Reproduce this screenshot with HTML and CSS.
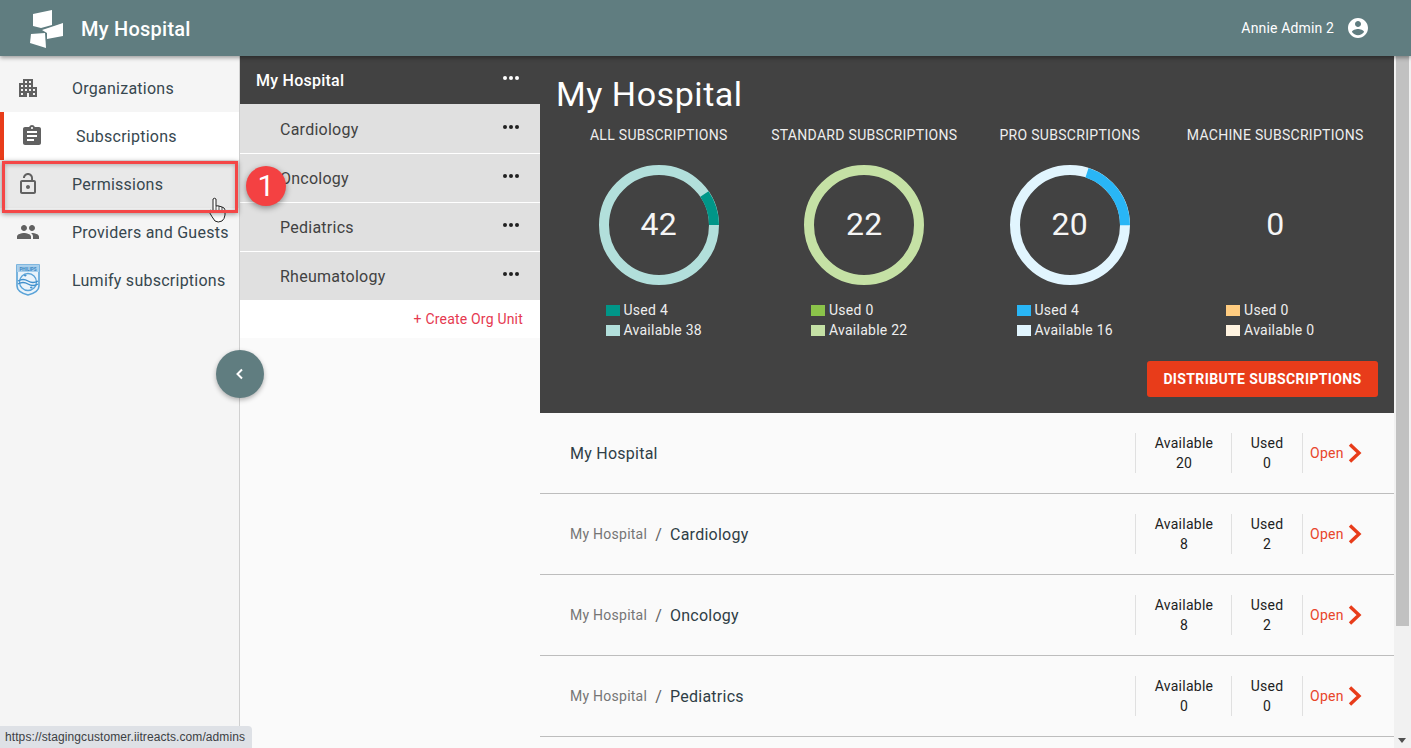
FILE: index.html
```html
<!DOCTYPE html>
<html lang="en">
<head>
  <meta charset="UTF-8" />
  <title>My Hospital</title>
  <link rel="stylesheet" href="styles.css">
</head>
<body>

  <header class="topbar">
    <div class="brand">
      <svg class="brand-logo" width="34" height="38" viewBox="30 9 34 38">
        <path d="M33 13 L52 9 L52 24 L41 27 L33 25 Z" fill="#fff"/>
        <path d="M42 29 L63 22 L63 35 L47 38 L47 32 Z" fill="#fff"/>
        <path d="M31 33 L45 32 L46 47 L30 42 Z" fill="#fff"/>
      </svg>
      <span class="brand-name">My Hospital</span>
    </div>
    <div class="user">
      <span>Annie Admin 2</span>
      <svg width="24" height="24" viewBox="0 0 24 24"><path fill="#fff" d="M12 2C6.48 2 2 6.48 2 12s4.48 10 10 10 10-4.48 10-10S17.52 2 12 2zm0 3c1.66 0 3 1.34 3 3s-1.34 3-3 3-3-1.34-3-3 1.34-3 3-3zm0 14.2c-2.5 0-4.71-1.28-6-3.22.03-1.99 4-3.08 6-3.08 1.99 0 5.97 1.09 6 3.08-1.29 1.94-3.5 3.22-6 3.22z"/></svg>
    </div>
  </header>

  <div class="content">
    <nav class="sidebar">
      <a class="nav-item">
        <svg width="24" height="24" viewBox="0 0 24 24"><path fill="#616161" d="M17 11V3H7v4H3v14h8v-4h2v4h8V11h-4zM7 19H5v-2h2v2zm0-4H5v-2h2v2zm0-4H5V9h2v2zm4 4H9v-2h2v2zm0-4H9V9h2v2zm0-4H9V5h2v2zm4 8h-2v-2h2v2zm0-4h-2V9h2v2zm0-4h-2V5h2v2zm4 12h-2v-2h2v2zm0-4h-2v-2h2v2z"/></svg>
        <span>Organizations</span>
      </a>
      <a class="nav-item active">
        <svg width="24" height="24" viewBox="0 0 24 24"><path fill="#616161" d="M19 3h-4.18C14.4 1.84 13.3 1 12 1s-2.4.84-2.82 2H5c-1.1 0-2 .9-2 2v14c0 1.1.9 2 2 2h14c1.1 0 2-.9 2-2V5c0-1.1-.9-2-2-2zm-7 0c.55 0 1 .45 1 1s-.45 1-1 1-1-.45-1-1 .45-1 1-1zm2 14H7v-2h7v2zm3-4H7v-2h10v2zm0-4H7V7h10v2z"/></svg>
        <span>Subscriptions</span>
      </a>
      <a class="nav-item hover">
        <svg width="24" height="24" viewBox="0 0 24 24"><path fill="#616161" d="M12 17c1.1 0 2-.9 2-2s-.9-2-2-2-2 .9-2 2 .9 2 2 2zm6-9h-1V6c0-2.76-2.24-5-5-5S7 3.24 7 6h1.9c0-1.71 1.39-3.1 3.1-3.1 1.71 0 3.1 1.39 3.1 3.1v2H6c-1.1 0-2 .9-2 2v10c0 1.1.9 2 2 2h12c1.1 0 2-.9 2-2V10c0-1.1-.9-2-2-2zm0 12H6V10h12v10z"/></svg>
        <span>Permissions</span>
      </a>
      <a class="nav-item">
        <svg width="24" height="24" viewBox="0 0 24 24"><path fill="#616161" d="M16 11c1.66 0 2.99-1.34 2.99-3S17.66 5 16 5c-1.66 0-3 1.34-3 3s1.34 3 3 3zm-8 0c1.66 0 2.99-1.34 2.99-3S9.66 5 8 5C6.34 5 5 6.34 5 8s1.34 3 3 3zm0 2c-2.33 0-7 1.17-7 3.5V19h14v-2.5c0-2.33-4.67-3.5-7-3.5zm8 0c-.29 0-.62.02-.97.05 1.16.84 1.97 1.97 1.97 3.45V19h6v-2.5c0-2.33-4.67-3.5-7-3.5z"/></svg>
        <span>Providers and Guests</span>
      </a>
      <a class="nav-item">
        <svg class="shield" width="24" height="32" viewBox="0 0 24 32">
          <path d="M1 1 H23 V22 Q23 28 12 31 Q1 28 1 22 Z" fill="#eaf3fa" stroke="#5aa3d8" stroke-width="1.6"/>
          <rect x="1" y="1" width="22" height="7" fill="#a9cfeb"/>
          <text x="12" y="6.5" class="shield-text">PHILIPS</text>
          <circle cx="12" cy="18" r="8.5" fill="none" stroke="#5aa3d8" stroke-width="1.3"/>
          <path d="M2 17 Q7 14 12 17 T22 17" fill="none" stroke="#3f8fcc" stroke-width="1.4"/>
          <path d="M2 20 Q7 17 12 20 T22 20" fill="none" stroke="#3f8fcc" stroke-width="1.4"/>
          <path d="M8 11.5 h2.5 M9.2 10.3 v2.4 M14 23.5 h2.5 M15.2 22.3 v2.4" stroke="#3f8fcc" stroke-width=".9"/>
        </svg>
        <span>Lumify subscriptions</span>
      </a>
    </nav>

    <section class="orgs">
      <div class="org-head">
        <span>My Hospital</span>
        <span class="dots"><i></i><i></i><i></i></span>
      </div>
      <div class="org-item"><span>Cardiology</span><span class="dots"><i></i><i></i><i></i></span></div>
      <div class="org-item"><span>Oncology</span><span class="dots"><i></i><i></i><i></i></span></div>
      <div class="org-item"><span>Pediatrics</span><span class="dots"><i></i><i></i><i></i></span></div>
      <div class="org-item"><span>Rheumatology</span><span class="dots"><i></i><i></i><i></i></span></div>
      <div class="org-create">+ Create Org Unit</div>
    </section>

    <main class="main">
      <section class="summary">
        <h1>My Hospital</h1>
        <div class="charts">
          <div class="chart">
            <h2>ALL SUBSCRIPTIONS</h2>
            <div class="donut">
              <svg width="120" height="120" viewBox="0 0 120 120">
                <circle cx="60" cy="60" r="55" fill="none" stroke="#b2dfdb" stroke-width="10"/>
                <circle cx="60" cy="60" r="55" fill="none" stroke="#009688" stroke-width="10" stroke-dasharray="32.9 400" transform="rotate(-34.3 60 60)"/>
              </svg>
              <b>42</b>
            </div>
            <ul class="legend">
              <li><i class="sw sw-teal"></i>Used 4</li>
              <li><i class="sw sw-teal-l"></i>Available 38</li>
            </ul>
          </div>
          <div class="chart">
            <h2>STANDARD SUBSCRIPTIONS</h2>
            <div class="donut">
              <svg width="120" height="120" viewBox="0 0 120 120">
                <circle cx="60" cy="60" r="55" fill="none" stroke="#c5e1a5" stroke-width="10"/>
              </svg>
              <b>22</b>
            </div>
            <ul class="legend">
              <li><i class="sw sw-green"></i>Used 0</li>
              <li><i class="sw sw-green-l"></i>Available 22</li>
            </ul>
          </div>
          <div class="chart">
            <h2>PRO SUBSCRIPTIONS</h2>
            <div class="donut">
              <svg width="120" height="120" viewBox="0 0 120 120">
                <circle cx="60" cy="60" r="55" fill="none" stroke="#e1f5fe" stroke-width="10"/>
                <circle cx="60" cy="60" r="55" fill="none" stroke="#29b6f6" stroke-width="10" stroke-dasharray="69.1 400" transform="rotate(-72 60 60)"/>
              </svg>
              <b>20</b>
            </div>
            <ul class="legend">
              <li><i class="sw sw-blue"></i>Used 4</li>
              <li><i class="sw sw-blue-l"></i>Available 16</li>
            </ul>
          </div>
          <div class="chart">
            <h2>MACHINE SUBSCRIPTIONS</h2>
            <div class="donut"><b>0</b></div>
            <ul class="legend">
              <li><i class="sw sw-orange"></i>Used 0</li>
              <li><i class="sw sw-orange-l"></i>Available 0</li>
            </ul>
          </div>
        </div>
        <div class="actions">
          <button class="btn">DISTRIBUTE SUBSCRIPTIONS</button>
        </div>
      </section>

      <div class="row">
        <div class="row-name"><span class="unit">My Hospital</span></div>
        <div class="stat stat-a">Available<br>20</div>
        <div class="stat stat-u">Used<br>0</div>
        <a class="open">Open <svg width="14" height="20" viewBox="0 0 14 20"><path d="M2 1.5 L11 10 L2 18.5" fill="none" stroke="#e83c1a" stroke-width="3.4"/></svg></a>
      </div>
      <div class="row">
        <div class="row-name"><span class="crumb">My Hospital</span><span class="sep">/</span><span class="unit">Cardiology</span></div>
        <div class="stat stat-a">Available<br>8</div>
        <div class="stat stat-u">Used<br>2</div>
        <a class="open">Open <svg width="14" height="20" viewBox="0 0 14 20"><path d="M2 1.5 L11 10 L2 18.5" fill="none" stroke="#e83c1a" stroke-width="3.4"/></svg></a>
      </div>
      <div class="row">
        <div class="row-name"><span class="crumb">My Hospital</span><span class="sep">/</span><span class="unit">Oncology</span></div>
        <div class="stat stat-a">Available<br>8</div>
        <div class="stat stat-u">Used<br>2</div>
        <a class="open">Open <svg width="14" height="20" viewBox="0 0 14 20"><path d="M2 1.5 L11 10 L2 18.5" fill="none" stroke="#e83c1a" stroke-width="3.4"/></svg></a>
      </div>
      <div class="row">
        <div class="row-name"><span class="crumb">My Hospital</span><span class="sep">/</span><span class="unit">Pediatrics</span></div>
        <div class="stat stat-a">Available<br>0</div>
        <div class="stat stat-u">Used<br>0</div>
        <a class="open">Open <svg width="14" height="20" viewBox="0 0 14 20"><path d="M2 1.5 L11 10 L2 18.5" fill="none" stroke="#e83c1a" stroke-width="3.4"/></svg></a>
      </div>
    </main>

    <div class="scrollbar">
      <div class="scroll-thumb"></div>
      <span class="scroll-down"></span>
    </div>
  </div>

  <!-- overlays -->
  <svg class="hand" width="18" height="26" viewBox="0 0 18 26">
    <path d="M5 2 Q6.5 .5 8 2 V9 L10 8.8 L12 9.4 L14 10 L16 11 Q17 12 17 14 V18 Q16.5 22 14 24 Q10 26 7 24 Q4 20 1.5 15.5 Q1 13.5 2.8 13.2 Q4 13.4 5 15 Z" fill="#fff" stroke="#222" stroke-width="1"/>
    <path d="M8 9 V14 M11 9 V14 M14 10 V14" stroke="#222" stroke-width=".8" fill="none"/>
  </svg>
  <div class="callout-box"></div>
  <div class="callout-badge">1</div>
  <button class="collapse">
    <svg width="12" height="12" viewBox="0 0 12 12"><path d="M8 1.5 L3.5 6 L8 10.5" fill="none" stroke="#fff" stroke-width="2"/></svg>
  </button>
  <div class="status-url">https://stagingcustomer.iitreacts.com/admins</div>

</body>
</html>
```

FILE: styles.css
```css
* {
  box-sizing: border-box;
}

html, body {
  height: 100%;
}

body {
  margin: 0;
  font-family: Roboto, Arial, sans-serif;
  font-size: 16px;
  letter-spacing: .25px;
  color: #212121;
  background: #fafafa;
  overflow: hidden;
  display: flex;
  flex-direction: column;
}

.topbar {
  height: 56px;
  flex: none;
  background: #607d80;
  color: #fff;
  display: flex;
  align-items: center;
  justify-content: space-between;
  padding: 0 41px 0 30px;
  position: relative;
  z-index: 3;
  box-shadow: 0 2px 4px rgba(0, 0, 0, .35);
}

.brand {
  display: flex;
  align-items: center;
  gap: 17px;
}

.brand-logo {
  margin-top: 1px;
}

.brand-name {
  font-size: 20px;
  font-weight: 500;
  letter-spacing: .25px;
  padding-top: 2px;
}

.user {
  display: flex;
  align-items: center;
  gap: 12px;
  font-size: 14px;
  letter-spacing: .15px;
}

.content {
  flex: 1;
  display: flex;
  min-height: 0;
}

/* left menu */
.sidebar {
  width: 240px;
  flex: none;
  padding-top: 8px;
  background: #f5f5f5;
  border-right: 1px solid #d0d0d0;
}

.nav-item {
  height: 48px;
  display: flex;
  align-items: center;
  padding-left: 16px;
  gap: 32px;
  color: #37474f;
}

.nav-item.active {
  background: #fff;
  border-left: 4px solid #e83c1a;
}

.nav-item.hover {
  background: #e9e9e9;
}

.shield {
  flex: none;
}

.shield-text {
  font-size: 4.6px;
  font-weight: 700;
  letter-spacing: 0;
  fill: #3a86c4;
  text-anchor: middle;
}

/* org units */
.orgs {
  width: 300px;
  flex: none;
  background: #fafafa;
}

.org-head, .org-item {
  display: flex;
  align-items: center;
  justify-content: space-between;
  padding-right: 21px;
}

.org-head {
  height: 49px;
  padding-left: 16px;
  background: #424242;
  color: #fff;
  border-bottom: 1px solid #e0e0e0;
}

.org-head span:first-child {
  font-weight: 500;
}

.org-item {
  height: 49px;
  padding-left: 40px;
  background: #e0e0e0;
  color: #424242;
  border-bottom: 1px solid #fff;
}

.dots {
  display: flex;
  gap: 2px;
  margin-bottom: 4px;
}

.dots i {
  width: 4px;
  height: 4px;
  border-radius: 50%;
  background: #212121;
}

.org-head .dots i {
  background: #fff;
}

.org-create {
  height: 37px;
  background: #fff;
  color: #e53950;
  font-size: 14px;
  letter-spacing: .2px;
  text-align: right;
  padding: 10px 17px 0 0;
}

/* right side */
.main {
  flex: 1;
  min-width: 0;
  overflow: hidden;
}

.summary {
  height: 357px;
  background: #424242;
  color: #fff;
  padding: 16px 16px 0;
}

.summary h1 {
  margin: 0;
  font-size: 34px;
  font-weight: 400;
  line-height: 44px;
  letter-spacing: .55px;
}

.charts {
  display: grid;
  grid-template-columns: repeat(4, 1fr);
}

.chart {
  text-align: center;
}

.chart h2 {
  margin: 9px 0 20px;
  font-size: 14px;
  font-weight: 400;
  line-height: 20px;
  letter-spacing: .3px;
  color: #eee;
}

.donut {
  height: 120px;
  position: relative;
  display: flex;
  align-items: center;
  justify-content: center;
}

.donut svg {
  display: block;
}

.donut b {
  position: absolute;
  font-size: 32px;
  font-weight: 400;
  margin-top: -2px;
  color: #f5f5f5;
}

.legend {
  display: inline-block;
  list-style: none;
  margin: 15px 10px 0 0;
  padding: 0;
  text-align: left;
  font-size: 14px;
  color: #eee;
}

.legend li {
  height: 20px;
  line-height: 20px;
  display: flex;
  align-items: center;
}

.sw {
  width: 14px;
  height: 11px;
  margin-right: 4px;
}

.sw-teal { background: #009688; }
.sw-teal-l { background: #b2dfdb; }
.sw-green { background: #8bc34a; }
.sw-green-l { background: #c5e1a5; }
.sw-blue { background: #29b6f6; }
.sw-blue-l { background: #e1f5fe; }
.sw-orange { background: #ffcc80; }
.sw-orange-l { background: #fff3e0; }

.actions {
  display: flex;
  justify-content: flex-end;
  margin-top: 21px;
}

.btn {
  width: 231px;
  height: 36px;
  border: none;
  border-radius: 3px;
  background: #e83c1a;
  color: #fff;
  font-family: inherit;
  font-size: 14px;
  font-weight: 700;
  letter-spacing: .37px;
}

.row {
  height: 81px;
  display: flex;
  align-items: center;
  padding-left: 30px;
  border-bottom: 1px solid #bdbdbd;
}

.row-name {
  flex: 1;
  display: flex;
  align-items: center;
}

.crumb {
  font-size: 14px;
  color: #757575;
}

.sep {
  margin: 0 8px;
  color: #616161;
}

.unit {
  color: #2f3e46;
}

.stat {
  height: 40px;
  font-size: 14px;
  line-height: 20px;
  text-align: center;
  border-left: 1px solid #e0e0e0;
}

.stat-a {
  width: 96px;
  padding-left: 1px;
}

.stat-u {
  width: 71px;
}

.open {
  width: 92px;
  height: 40px;
  border-left: 1px solid #e0e0e0;
  padding-left: 7px;
  display: flex;
  align-items: center;
  gap: 4px;
  font-size: 14px;
  color: #e8452a;
}

.scrollbar {
  width: 17px;
  flex: none;
  background: #f1f1f1;
  position: relative;
}

.scroll-thumb {
  height: 570px;
  background: #c1c1c1;
  margin: 0 2px;
}

.scroll-down {
  position: absolute;
  bottom: 5px;
  left: 4px;
  border: 4px solid transparent;
  border-top: 5px solid #505050;
  border-bottom: 0;
}

/* overlays */
.callout-box {
  position: absolute;
  left: 2px;
  top: 161px;
  width: 236px;
  height: 52px;
  border: 3px solid #f44747;
  box-shadow: 0 1px 5px rgba(0, 0, 0, .4), inset 0 1px 4px rgba(0, 0, 0, .25);
}

.callout-badge {
  position: absolute;
  left: 246px;
  top: 166px;
  width: 40px;
  height: 40px;
  border-radius: 50%;
  background: #f44142;
  color: #fff;
  font-size: 30px;
  letter-spacing: 0;
  line-height: 40px;
  text-align: center;
  box-shadow: 0 2px 6px rgba(0, 0, 0, .4);
}

.hand {
  position: absolute;
  left: 208px;
  top: 197px;
}

.collapse {
  position: absolute;
  left: 216px;
  top: 350px;
  width: 48px;
  height: 48px;
  border: none;
  border-radius: 50%;
  background: #607d80;
  padding: 0;
  display: flex;
  align-items: center;
  justify-content: center;
  box-shadow: 0 2px 5px rgba(0, 0, 0, .3);
}

.status-url {
  position: absolute;
  left: 0;
  bottom: 0;
  height: 22px;
  width: 252px;
  padding-left: 5px;
  background: #dee1e6;
  border-top-right-radius: 4px;
  color: #3c4043;
  font-family: "Liberation Sans", Arial, sans-serif;
  font-size: 12px;
  letter-spacing: .09px;
  line-height: 23px;
  white-space: nowrap;
}
```
